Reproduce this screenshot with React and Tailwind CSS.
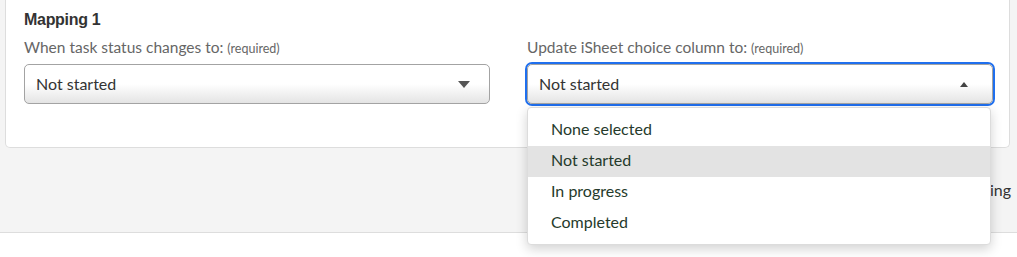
import React from "react";

const options = ["None selected", "Not started", "In progress", "Completed"];

function Caret({ up }) {
  if (up) {
    return (
      <svg width="8" height="5" viewBox="0 0 8 5" className="shrink-0">
        <path d="M0 5 L4 0 L8 5 Z" fill="#444" />
      </svg>
    );
  }
  return (
    <svg width="12" height="7" viewBox="0 0 12 7" className="shrink-0">
      <path d="M0 0 L12 0 L6 7 Z" fill="#555" />
    </svg>
  );
}

function Field({ label, value, open }) {
  return (
    <div>
      <div className="text-[15.5px] leading-5 text-[#666] mb-[5px]">
        {label} <span className="text-[12.5px]">(required)</span>
      </div>
      <div className="relative">
        <div
          className={
            "h-[40px] flex items-center justify-between rounded-[5px] border border-[#a3a3a3] bg-linear-to-b from-white via-white to-[#e4e4e4] text-[16px] text-[#333] pl-[11px] " +
            (open ? "pr-[24px] ring-2 ring-[#1f6fee]" : "pr-[19px]")
          }
        >
          <span>{value}</span>
          <Caret up={open} />
        </div>
        {open && (
          <div className="absolute left-0 right-[2px] top-[calc(100%+3px)] z-10 bg-white border border-[#dcdcdc] rounded-[4px] shadow-[0_4px_12px_rgba(0,0,0,0.18)] pt-[7px] pb-[5px]">
            {options.map((o) => (
              <div
                key={o}
                className={
                  "h-[31px] flex items-center pb-[3px] pl-[23px] text-[16px] text-[#253a2b] " +
                  (o === value ? "bg-[#e3e3e3]" : "")
                }
              >
                {o}
              </div>
            ))}
          </div>
        )}
      </div>
    </div>
  );
}

export default function App() {
  return (
    <div className="h-[257px] bg-[#f4f4f4] flex flex-col" style={{ fontFamily: "Lato, 'Open Sans', sans-serif" }}>
      <div className="ml-[5px] mr-[7px] bg-white border border-t-0 border-[#dddddd] rounded-b-[5px] pl-[18px] pr-[16px] pt-[10px] pb-[43px]">
        <h2
          className="text-[16px] leading-5 font-bold text-[#333] tracking-[-0.3px] mb-[7px]"
          style={{ fontFamily: "'Liberation Sans', Arial, sans-serif" }}
        >
          Mapping 1
        </h2>
        <div className="grid grid-cols-2 gap-x-[37px]">
          <Field label="When task status changes to:" value="Not started" />
          <Field label="Update iSheet choice column to:" value="Not started" open />
        </div>
      </div>
      <div className="h-[84px] flex items-center justify-end pr-[6px] text-[16px] text-[#333]">
        Add another mapping
      </div>
      <div className="flex-1 bg-white border-t border-[#dddddd]"></div>
    </div>
  );
}
